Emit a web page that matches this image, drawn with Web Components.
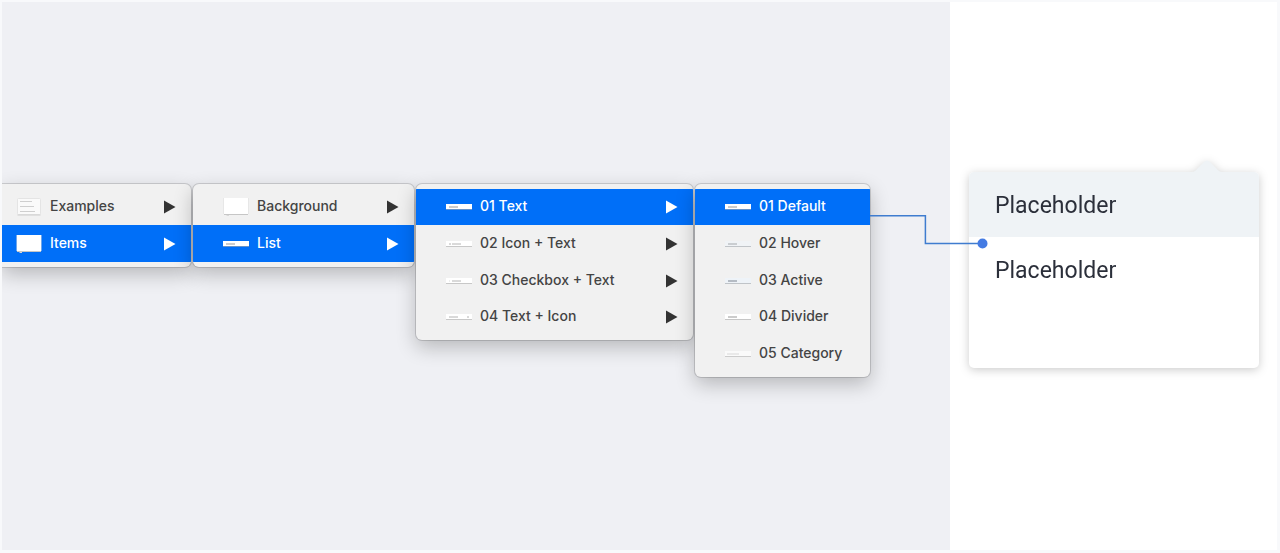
<!DOCTYPE html>
<html lang="en">
<head>
<meta charset="utf-8">
<title>Symbol menu</title>
<style>
  html, body { height: 100%; }
  body { margin: 0; background: #f8f9fb; font-family: Inter, "Liberation Sans", sans-serif; }
</style>
</head>
<body>
<symbol-page>
  <menu-cascade slot="canvas">
    <menu-panel class="first" label="Symbols">
      <menu-entry thumb="page" more>Examples</menu-entry>
      <menu-entry thumb="card" more selected>Items</menu-entry>
    </menu-panel>
    <menu-panel class="second" label="Items">
      <menu-entry thumb="card" more>Background</menu-entry>
      <menu-entry thumb="bar" more selected>List</menu-entry>
    </menu-panel>
    <menu-panel class="third" label="List">
      <menu-entry thumb="bar" more selected>01 Text</menu-entry>
      <menu-entry thumb="bar-icon" more>02 Icon + Text</menu-entry>
      <menu-entry thumb="bar-check" more>03 Checkbox + Text</menu-entry>
      <menu-entry thumb="bar-end" more>04 Text + Icon</menu-entry>
    </menu-panel>
    <menu-panel class="fourth" label="Text">
      <menu-entry thumb="bar" selected>01 Default</menu-entry>
      <menu-entry thumb="hover">02 Hover</menu-entry>
      <menu-entry thumb="active">03 Active</menu-entry>
      <menu-entry thumb="bar">04 Divider</menu-entry>
      <menu-entry thumb="category">05 Category</menu-entry>
    </menu-panel>
  </menu-cascade>
  <popover-card slot="preview">
    <popover-item active>Placeholder</popover-item>
    <popover-item>Placeholder</popover-item>
  </popover-card>
</symbol-page>

<script>
const define = (name, html, setup) => {
  const template = document.createElement("template");
  template.innerHTML = html;
  customElements.define(name, class extends HTMLElement {
    constructor() {
      super();
      this.attachShadow({ mode: "open" }).append(template.content.cloneNode(true));
    }
    connectedCallback() { if (setup) setup(this, this.shadowRoot); }
  });
};

define("symbol-page", `
  <style>
    :host { display: flex; box-sizing: border-box; min-height: 100%; padding: 2px 3px 3px 2px; }
    main { flex: 1; background: #eff0f4; padding-top: 182px; }
    aside { flex: none; box-sizing: border-box; width: 327px; background: #fff; padding: 170px 18px 0 19px; }
  </style>
  <main><slot name="canvas"></slot></main>
  <aside><slot name="preview"></slot></aside>`);

define("menu-cascade", `
  <style>
    :host { display: flex; }
    nav { position: relative; z-index: 1; display: flex; align-items: flex-start; gap: 2px; }
    ::slotted(.first) { width: 189px; --indent: 13px; --corners: 0 6px 6px 0; clip-path: inset(-40px -40px -40px 0); }
    ::slotted(.second) { width: 221px; }
    ::slotted(.third) { width: 277px; }
    ::slotted(.fourth) { width: 175px; }
    svg { position: absolute; left: 100%; top: 26px; }
  </style>
  <nav aria-label="Symbol menus">
    <slot></slot>
    <svg width="120" height="40" viewBox="0 0 120 40" fill="none" aria-hidden="true">
      <path d="M0 5.7H55.4V33.5H112" stroke="#3f7ccf" stroke-width="1.5"/>
      <circle cx="112.5" cy="33.5" r="5" fill="#447be3"/>
    </svg>
  </nav>`);

define("menu-panel", `
  <style>
    :host { display: block; position: relative; }
    div {
      padding: 5px 0; overflow: hidden; background: #f1f1f1;
      border-radius: var(--corners, 6px);
      box-shadow: 0 0 0 1px rgba(0,0,0,.14), 0 7px 20px rgba(0,0,0,.24);
    }
    ::slotted(*) { height: 37px; }
    ::slotted(:nth-child(3n+1)) { height: 36px; }
  </style>
  <div role="group"><slot></slot></div>`,
  (host, root) => root.querySelector("div").setAttribute("aria-label", host.getAttribute("label")));

const thumbs = {
  page: `<rect x="2.5" y="5.5" width="23" height="16" rx="1" fill="#fafafa" stroke="#e4e4e4"/><path d="M2.5 22H25.5" stroke="#cecece"/><path d="M5 8.5H17M5 13.5H19M5 18.5H20" stroke="#cfcfcf"/>`,
  card: `<path d="M2 21.5H26" stroke="#c6c6c6"/><path d="M4.500 22.500H7" stroke="#d8d8d8"/><rect x="2" y="5" width="24" height="16" fill="#fff"/><path d="M1.500 5V21M26.500 5V21" stroke="#ddd" stroke-opacity=".5"/>`,
  bar: `<path d="M1 16.500H27" stroke="#aaa" stroke-opacity=".6"/><path d="M1 11H27V16H1Z" fill="#fff"/><path d="M4 14H13" stroke="#999"/>`,
  "bar-icon": `<path d="M1 16.500H27" stroke="#c8c8c8"/><path d="M1 11H27V16H1Z" fill="#fff"/><path d="M4 14H6M7 14H16" stroke="#b4b4b4"/>`,
  "bar-check": `<path d="M1 16.500H27" stroke="#c8c8c8"/><path d="M1 11H27V16H1Z" fill="#fff"/><path d="M4 14H5" stroke="#ddd"/><path d="M7 14H16" stroke="#b4b4b4"/>`,
  "bar-end": `<path d="M1 16.500H27" stroke="#c8c8c8"/><path d="M1 11H27V16H1Z" fill="#fff"/><path d="M4 14H13M22 14H24" stroke="#b4b4b4"/>`,
  hover: `<path d="M1 16.500H27" stroke="#c0c4c8"/><path d="M1 11H27V16H1Z" fill="#f0f3f6"/><path d="M4 14H13" stroke="#a4a8ac"/>`,
  active: `<path d="M1 16.500H27" stroke="#c0c4c8"/><path d="M1 11H27V16H1Z" fill="#eef3f8"/><path d="M4 14H13" stroke="#7c8490"/>`,
  category: `<path d="M1 16.500H27" stroke="#ccc"/><path d="M1 11H27V16H1Z" fill="#fafafa"/><path d="M3 14H15" stroke="#d8d8d8"/>`
};

define("menu-entry", `
  <style>
    :host { display: block; color: #444; }
    :host([selected]) { background: #006ff8; color: #fff; }
    button {
      display: flex; align-items: center; width: 100%; height: 100%;
      padding: 0 15px 0 var(--indent, 29px); border: 0; background: none; color: inherit;
      font: 500 14px/20px Inter, "Liberation Sans", sans-serif; text-align: left;
    }
    .thumb { flex: none; width: 28px; height: 28px; margin-right: 7px; }
    span { flex: 1; padding-bottom: 2px; white-space: nowrap; }
    .more { display: none; flex: none; color: #333; }
    :host([more]) .more { display: block; }
    :host([selected]) .more { color: #fff; }
  </style>
  <button type="button">
    <svg class="thumb" viewBox="0 0 28 28" fill="none" aria-hidden="true"></svg>
    <span><slot></slot></span>
    <svg class="more" width="12" height="14" viewBox="0 0 12 14" aria-hidden="true"><path d="M0 .5 11.500 7 0 13.500Z" fill="currentColor"/></svg>
  </button>`,
  (host, root) => { root.querySelector(".thumb").innerHTML = thumbs[host.getAttribute("thumb")]; });

define("popover-card", `
  <style>
    :host { display: block; position: relative; filter: drop-shadow(0 2px 5px rgba(0,0,0,.2)); }
    div { min-height: 196px; overflow: hidden; border-radius: 5px; background: #fff; }
    svg { position: absolute; right: 36px; bottom: 100%; display: block; }
  </style>
  <svg width="32" height="12" viewBox="0 0 32 12" aria-hidden="true"><path d="M0 12C4 12 5 10 7 8L13 2Q16-1 19 2L25 8C27 10 28 12 32 12Z" fill="#eff3f6"/></svg>
  <div><slot></slot></div>`);

define("popover-item", `
  <style>
    :host { display: block; color: #2b2f3a; }
    :host([active]) { background: #eff3f6; }
    button {
      display: block; width: 100%; height: 65px; padding: 2px 26px 0; border: 0; background: none;
      color: inherit; font: 400 23px/32px Roboto, "Liberation Sans", sans-serif; text-align: left;
    }
  </style>
  <button type="button"><slot></slot></button>`);
</script>
</body>
</html>
